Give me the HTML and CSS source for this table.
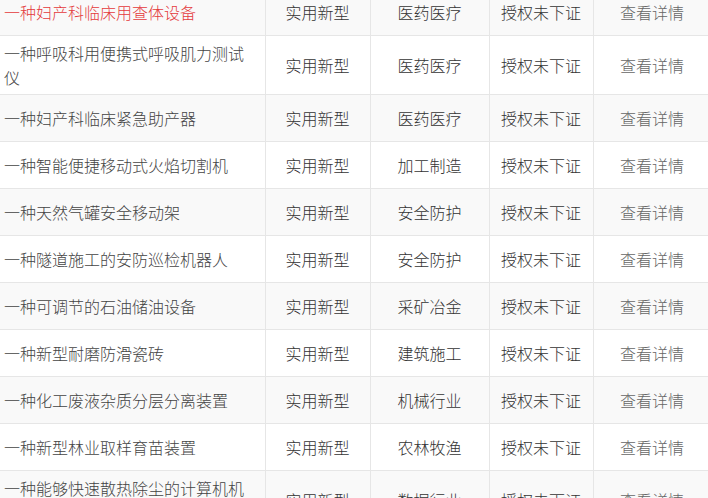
FILE: index.html
```html
<!DOCTYPE html>
<html lang="zh-CN">
<head>
<meta charset="utf-8">
<title>专利列表</title>
<link rel="stylesheet" href="styles.css">
</head>
<body>
<table class="patents">
  <colgroup>
    <col class="c-title"><col class="c-type"><col class="c-field"><col class="c-state"><col class="c-link">
  </colgroup>
  <tbody>
    <tr><td class="title hot">一种妇产科临床用查体设备</td><td>实用新型</td><td>医药医疗</td><td>授权未下证</td><td class="more">查看详情</td></tr>
    <tr><td class="title">一种呼吸科用便携式呼吸肌力测试仪</td><td>实用新型</td><td>医药医疗</td><td>授权未下证</td><td class="more">查看详情</td></tr>
    <tr><td class="title">一种妇产科临床紧急助产器</td><td>实用新型</td><td>医药医疗</td><td>授权未下证</td><td class="more">查看详情</td></tr>
    <tr><td class="title">一种智能便捷移动式火焰切割机</td><td>实用新型</td><td>加工制造</td><td>授权未下证</td><td class="more">查看详情</td></tr>
    <tr><td class="title">一种天然气罐安全移动架</td><td>实用新型</td><td>安全防护</td><td>授权未下证</td><td class="more">查看详情</td></tr>
    <tr><td class="title">一种隧道施工的安防巡检机器人</td><td>实用新型</td><td>安全防护</td><td>授权未下证</td><td class="more">查看详情</td></tr>
    <tr><td class="title">一种可调节的石油储油设备</td><td>实用新型</td><td>采矿冶金</td><td>授权未下证</td><td class="more">查看详情</td></tr>
    <tr><td class="title">一种新型耐磨防滑瓷砖</td><td>实用新型</td><td>建筑施工</td><td>授权未下证</td><td class="more">查看详情</td></tr>
    <tr><td class="title">一种化工废液杂质分层分离装置</td><td>实用新型</td><td>机械行业</td><td>授权未下证</td><td class="more">查看详情</td></tr>
    <tr><td class="title">一种新型林业取样育苗装置</td><td>实用新型</td><td>农林牧渔</td><td>授权未下证</td><td class="more">查看详情</td></tr>
    <tr><td class="title">一种能够快速散热除尘的计算机机箱</td><td>实用新型</td><td>数据行业</td><td>授权未下证</td><td class="more">查看详情</td></tr>
  </tbody>
</table>
</body>
</html>
```

FILE: styles.css
```css
html, body {
  margin: 0;
  padding: 0;
  background: #fff;
  overflow: hidden;
}

.patents {
  border-collapse: collapse;
  table-layout: fixed;
  width: 711px;
  margin-top: -12px;
  font-family: "Noto Sans CJK SC", "Microsoft YaHei", sans-serif;
  font-size: 16px;
  font-weight: 300;
  line-height: 24px;
  color: #333;
}

.c-title { width: 265px; }
.c-type { width: 105px; }
.c-field { width: 119px; }
.c-state { width: 104px; }
.c-link { width: 118px; }

.patents tr:nth-child(odd) { background: #f9f9f9; }
.patents tr:nth-child(even) { background: #fff; }

.patents td {
  height: 36px;
  padding: 5px 0;
  border: 1px solid #e6e6e6;
  text-align: center;
  vertical-align: middle;
}

.patents td.title {
  border-left: none;
  text-align: left;
  padding-left: 4px;
  padding-right: 10px;
  color: #444;
}

.patents td.hot { color: #e4393c; }

.patents td.more { color: #666; }
```
